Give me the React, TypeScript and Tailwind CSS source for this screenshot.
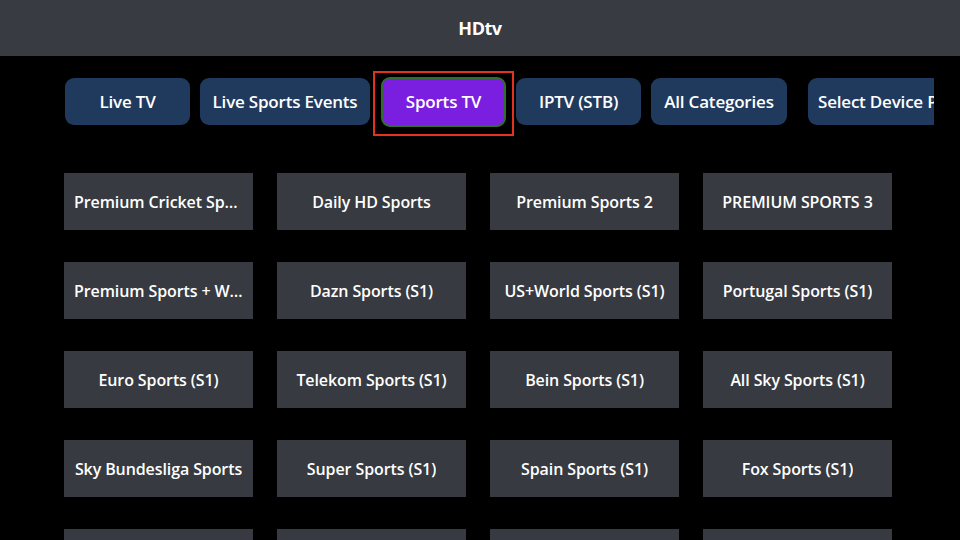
import React from 'react'
import clsx from 'clsx'

const tabs = [
  { label: 'Live TV', width: 'w-[125px]' },
  { label: 'Live Sports Events', width: 'w-[170px]' },
  { label: 'Sports TV', width: 'w-[125px]', active: true },
  { label: 'IPTV (STB)', width: 'w-[125px]' },
  { label: 'All Categories', width: 'w-[136px]' },
  { label: 'Select Device Player', width: 'w-[170px]', last: true },
]

const channels = [
  'Premium Cricket Sports',
  'Daily HD Sports',
  'Premium Sports 2',
  'PREMIUM SPORTS 3',
  'Premium Sports + World',
  'Dazn Sports (S1)',
  'US+World Sports (S1)',
  'Portugal Sports (S1)',
  'Euro Sports (S1)',
  'Telekom Sports (S1)',
  'Bein Sports (S1)',
  'All Sky Sports (S1)',
  'Sky Bundesliga Sports',
  'Super Sports (S1)',
  'Spain Sports (S1)',
  'Fox Sports (S1)',
  'Arena Sports (S1)',
  'Astro Sports (S1)',
  'Star Sports (S1)',
  'Ten Sports (S1)',
]

export default function App() {
  return (
    <div
      className="h-[540px] w-[960px] overflow-hidden bg-black text-white"
      style={{ fontFamily: '"Open Sans", "Noto Sans", sans-serif' }}
    >
      {/* Header */}
      <div className="h-14 bg-[#383b42] flex items-center justify-center">
        <h1 className="text-[18px] font-bold tracking-tight">HDtv</h1>
      </div>

      {/* Category tabs */}
      <div className="mt-[15px] h-[65px] w-[934px] overflow-hidden">
        <div className="flex items-start gap-[10px] pl-[65px] whitespace-nowrap">
          {tabs.map((tab) =>
            tab.active ? (
              <div
                key={tab.label}
                className="-ml-[7px] -mr-[8px] h-[65px] border-2 border-[#e3321f] px-[6px] pt-[4px] shrink-0"
              >
                <button
                  className={clsx(
                    'h-[50px] rounded-[9px] bg-[#7a1fdf] border-2 border-[#2f6e2c] text-[17px] font-semibold tracking-[-0.2px]',
                    tab.width
                  )}
                >
                  {tab.label}
                </button>
              </div>
            ) : (
              <button
                key={tab.label}
                className={clsx(
                  'mt-[7px] h-[47px] shrink-0 rounded-[9px] bg-[#203a5e] text-[17px] font-semibold tracking-[-0.2px]',
                  tab.last ? 'ml-[11px] pl-[10px] text-left' : 'text-center',
                  tab.width
                )}
              >
                {tab.label}
              </button>
            )
          )}
        </div>
      </div>

      {/* Channel grid */}
      <div className="mt-[37px] pl-[64px] grid grid-cols-[repeat(4,189px)] gap-x-[24px] gap-y-[32px]">
        {channels.map((name) => (
          <div
            key={name}
            className="h-[57px] bg-[#373a40] flex items-center justify-center px-[10px]"
          >
            <span className="truncate text-[16px] font-semibold tracking-[-0.1px]">{name}</span>
          </div>
        ))}
      </div>
    </div>
  )
}
